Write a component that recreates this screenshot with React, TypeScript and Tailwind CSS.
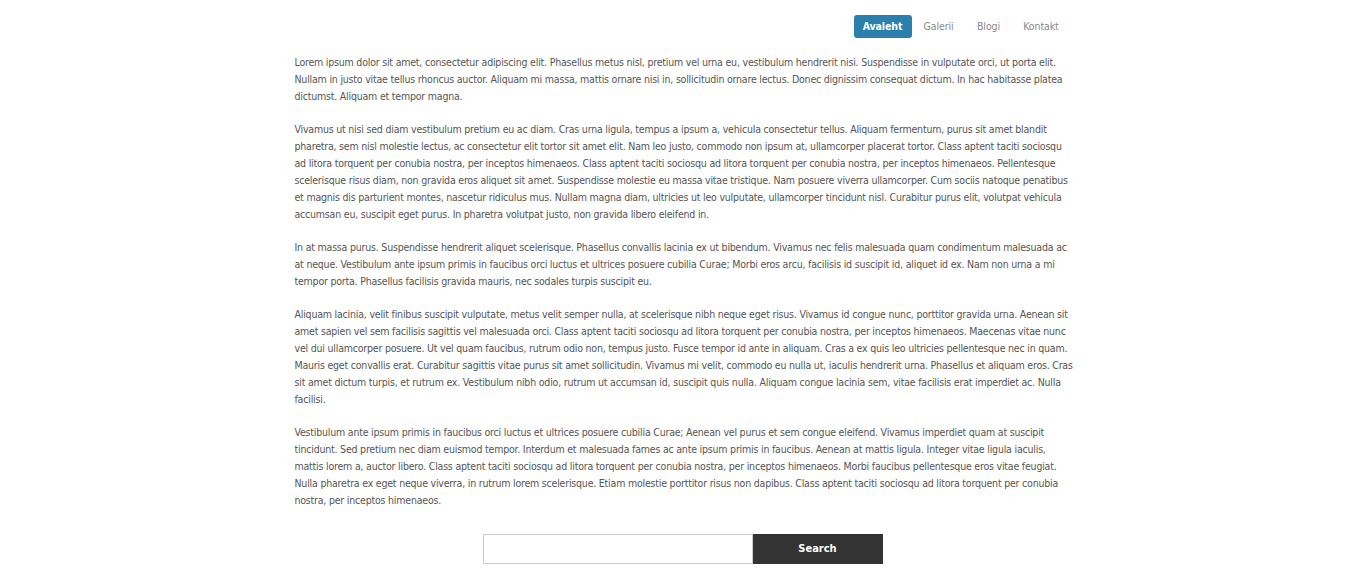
import React from "react";

const paragraphs: string[][] = [
  [
    "Lorem ipsum dolor sit amet, consectetur adipiscing elit. Phasellus metus nisl, pretium vel urna eu, vestibulum hendrerit nisi. Suspendisse in vulputate orci, ut porta elit.",
    "Nullam in justo vitae tellus rhoncus auctor. Aliquam mi massa, mattis ornare nisi in, sollicitudin ornare lectus. Donec dignissim consequat dictum. In hac habitasse platea",
    "dictumst. Aliquam et tempor magna.",
  ],
  [
    "Vivamus ut nisi sed diam vestibulum pretium eu ac diam. Cras urna ligula, tempus a ipsum a, vehicula consectetur tellus. Aliquam fermentum, purus sit amet blandit",
    "pharetra, sem nisl molestie lectus, ac consectetur elit tortor sit amet elit. Nam leo justo, commodo non ipsum at, ullamcorper placerat tortor. Class aptent taciti sociosqu",
    "ad litora torquent per conubia nostra, per inceptos himenaeos. Class aptent taciti sociosqu ad litora torquent per conubia nostra, per inceptos himenaeos. Pellentesque",
    "scelerisque risus diam, non gravida eros aliquet sit amet. Suspendisse molestie eu massa vitae tristique. Nam posuere viverra ullamcorper. Cum sociis natoque penatibus",
    "et magnis dis parturient montes, nascetur ridiculus mus. Nullam magna diam, ultricies ut leo vulputate, ullamcorper tincidunt nisl. Curabitur purus elit, volutpat vehicula",
    "accumsan eu, suscipit eget purus. In pharetra volutpat justo, non gravida libero eleifend in.",
  ],
  [
    "In at massa purus. Suspendisse hendrerit aliquet scelerisque. Phasellus convallis lacinia ex ut bibendum. Vivamus nec felis malesuada quam condimentum malesuada ac",
    "at neque. Vestibulum ante ipsum primis in faucibus orci luctus et ultrices posuere cubilia Curae; Morbi eros arcu, facilisis id suscipit id, aliquet id ex. Nam non urna a mi",
    "tempor porta. Phasellus facilisis gravida mauris, nec sodales turpis suscipit eu.",
  ],
  [
    "Aliquam lacinia, velit finibus suscipit vulputate, metus velit semper nulla, at scelerisque nibh neque eget risus. Vivamus id congue nunc, porttitor gravida urna. Aenean sit",
    "amet sapien vel sem facilisis sagittis vel malesuada orci. Class aptent taciti sociosqu ad litora torquent per conubia nostra, per inceptos himenaeos. Maecenas vitae nunc",
    "vel dui ullamcorper posuere. Ut vel quam faucibus, rutrum odio non, tempus justo. Fusce tempor id ante in aliquam. Cras a ex quis leo ultricies pellentesque nec in quam.",
    "Mauris eget convallis erat. Curabitur sagittis vitae purus sit amet sollicitudin. Vivamus mi velit, commodo eu nulla ut, iaculis hendrerit urna. Phasellus et aliquam eros. Cras",
    "sit amet dictum turpis, et rutrum ex. Vestibulum nibh odio, rutrum ut accumsan id, suscipit quis nulla. Aliquam congue lacinia sem, vitae facilisis erat imperdiet ac. Nulla",
    "facilisi.",
  ],
  [
    "Vestibulum ante ipsum primis in faucibus orci luctus et ultrices posuere cubilia Curae; Aenean vel purus et sem congue eleifend. Vivamus imperdiet quam at suscipit",
    "tincidunt. Sed pretium nec diam euismod tempor. Interdum et malesuada fames ac ante ipsum primis in faucibus. Aenean at mattis ligula. Integer vitae ligula iaculis,",
    "mattis lorem a, auctor libero. Class aptent taciti sociosqu ad litora torquent per conubia nostra, per inceptos himenaeos. Morbi faucibus pellentesque eros vitae feugiat.",
    "Nulla pharetra ex eget neque viverra, in rutrum lorem scelerisque. Etiam molestie porttitor risus non dapibus. Class aptent taciti sociosqu ad litora torquent per conubia",
    "nostra, per inceptos himenaeos.",
  ],
];

export default function App() {
  return (
    <div className="min-h-[574px] bg-white font-['DejaVu_Sans_Condensed','DejaVu_Sans',sans-serif] text-[#555]">
      <div className="mx-auto w-[776px]">
        <nav className="flex justify-end pt-[15px]">
          <ul className="flex items-center text-[10.5px] tracking-[-0.1px]">
            <li>
              <a
                href="#"
                className="block h-[23px] w-[58px] rounded-[3px] bg-[#2a7fac] text-center font-bold leading-[23px] text-white"
              >
                Avaleht
              </a>
            </li>
            <li>
              <a href="#" className="block h-[23px] w-[54px] text-center leading-[23px] text-[#8a8a8a]">
                Galerii
              </a>
            </li>
            <li>
              <a href="#" className="block h-[23px] w-[46px] text-center leading-[23px] text-[#8a8a8a]">
                Blogi
              </a>
            </li>
            <li>
              <a href="#" className="block h-[23px] w-[59px] text-center leading-[23px] text-[#8a8a8a]">
                Kontakt
              </a>
            </li>
          </ul>
        </nav>
        <main className="pt-[16px] text-[10.5px] leading-[17px] tracking-[-0.2px]">
          {paragraphs.map((lines, i) => (
            <p key={i} className="mb-[16px] last:mb-0">
              {lines.map((line, j) => (
                <span key={j} className="block whitespace-nowrap">
                  {line}
                </span>
              ))}
            </p>
          ))}
        </main>
        <form className="flex justify-center pt-[25px]" onSubmit={(e) => e.preventDefault()}>
          <input
            type="text"
            className="h-[30px] w-[270px] border border-[#cccccc] bg-white px-2 text-[12px] outline-none"
          />
          <button
            type="submit"
            className="h-[30px] w-[130px] bg-[#333333] text-[11px] font-bold text-white"
          >
            Search
          </button>
        </form>
      </div>
    </div>
  );
}
